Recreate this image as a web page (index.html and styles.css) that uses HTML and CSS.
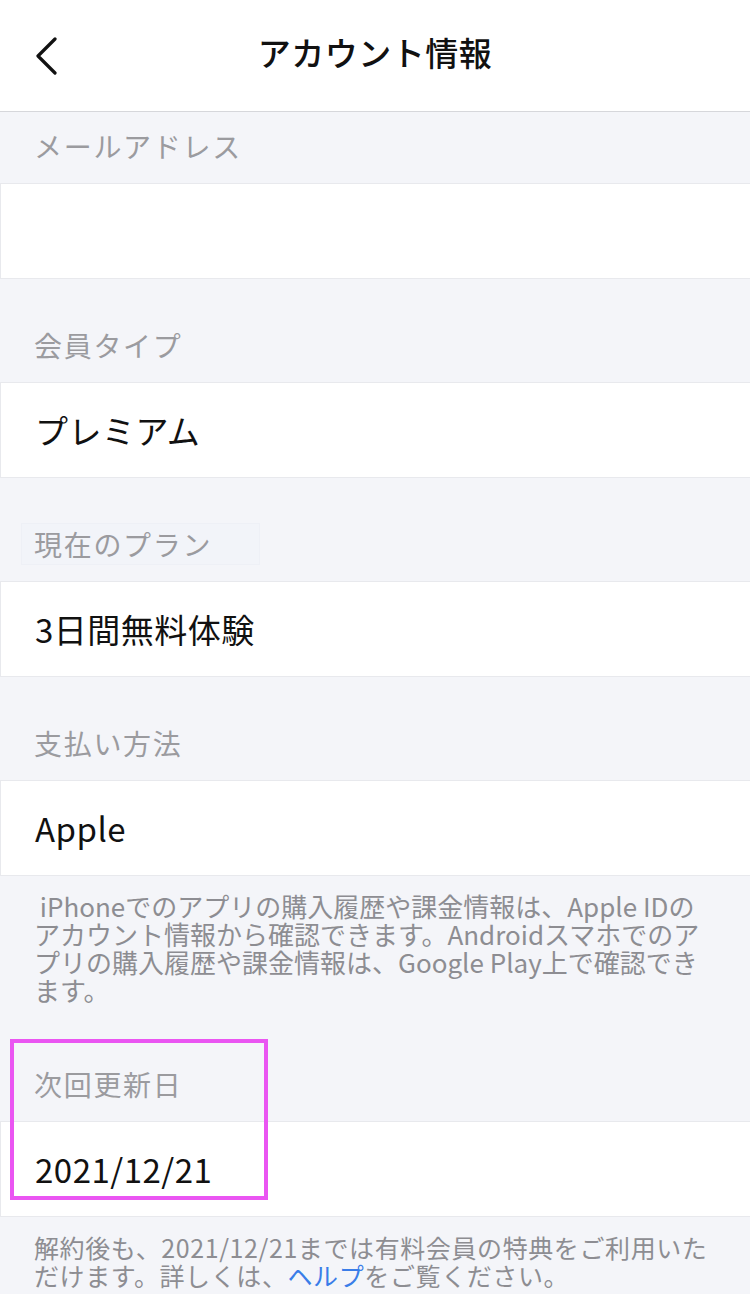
FILE: index.html
```html
<!DOCTYPE html>
<html lang="ja">
<head>
    <meta charset="UTF-8">
    <meta name="viewport" content="width=device-width, initial-scale=1.0">
    <title>アカウント情報</title>
    <link rel="stylesheet" href="styles.css">
</head>
<body>
    <header class="nav">
        <a class="back" href="#">
            <svg width="24" height="38" viewBox="0 0 24 38"><path d="M21 2 L4 19 L21 36" fill="none" stroke="#111" stroke-width="3.2" stroke-linecap="round" stroke-linejoin="round"/></svg>
        </a>
        <h1>アカウント情報</h1>
    </header>

    <div class="label first">メールアドレス</div>
    <div class="row"></div>

    <div class="label">会員タイプ</div>
    <div class="row">プレミアム</div>

    <div class="label"><span class="ghost">現在のプラン</span></div>
    <div class="row">3日間無料体験</div>

    <div class="label">支払い方法</div>
    <div class="row">Apple</div>

    <p class="note">&nbsp;iPhoneでのアプリの購入履歴や課金情報は、Apple IDの<br>アカウント情報から確認できます。Androidスマホでのア<br>プリの購入履歴や課金情報は、Google Play上で確認でき<br>ます。</p>

    <div class="marked">
        <div class="label after-note">次回更新日</div>
        <div class="row">2021/12/21</div>
        <div class="mark"></div>
    </div>

    <p class="note wide">解約後も、2021/12/21までは有料会員の特典をご利用いた<br>だけます。詳しくは、<a href="#">ヘルプ</a>をご覧ください。</p>
</body>
</html>
```

FILE: styles.css
```css
body {
    margin: 0;
    background: #f4f5f9;
    font-family: "Noto Sans CJK JP", "Noto Sans", sans-serif;
    color: #111;
    overflow: hidden;
}
.nav {
    height: 112px;
    background: #fff;
    border-bottom: 1px solid #d6d7db;
    box-sizing: border-box;
    display: flex;
    align-items: center;
    justify-content: center;
    position: relative;
}
.nav h1 {
    margin: 0 0 8px;
    font-size: 33px;
    font-weight: 500;
    letter-spacing: 0.5px;
}
.back {
    position: absolute;
    left: 34px;
    top: 37px;
    display: block;
    line-height: 0;
}
.label {
    padding: 46px 34px 17px;
    font-size: 28px;
    line-height: 40px;
    letter-spacing: 1.7px;
    color: #9b9b9f;
}
.label.first {
    padding-top: 14px;
}
.label.after-note {
    padding-top: 60px;
}
.ghost {
    display: inline-block;
    width: 213px;
    padding: 0 12px;
    margin-left: -12px;
    background: #f2f4f9;
    box-shadow: 0 0 0 1px #eef0f6;
}
.row {
    height: 96px;
    box-sizing: border-box;
    background: #fff;
    border-top: 1px solid #e8e9ed;
    border-bottom: 1px solid #e8e9ed;
    border-left: 1px solid #e8e9ed;
    padding: 0 34px;
    display: flex;
    align-items: center;
    font-size: 33px;
    letter-spacing: 0.5px;
}
.note {
    margin: 0;
    padding: 16px 34px 0;
    font-size: 26px;
    line-height: 28px;
    color: #8d8d92;
}
.note.wide {
    padding-top: 16px;
    font-size: 25px;
    letter-spacing: 0.6px;
}
.note a {
    color: #3a7de8;
    text-decoration: none;
}
.marked {
    position: relative;
}
.mark {
    position: absolute;
    left: 10px;
    top: 35px;
    width: 258px;
    height: 161px;
    box-sizing: border-box;
    border: 4px solid #ea55f2;
}
```
